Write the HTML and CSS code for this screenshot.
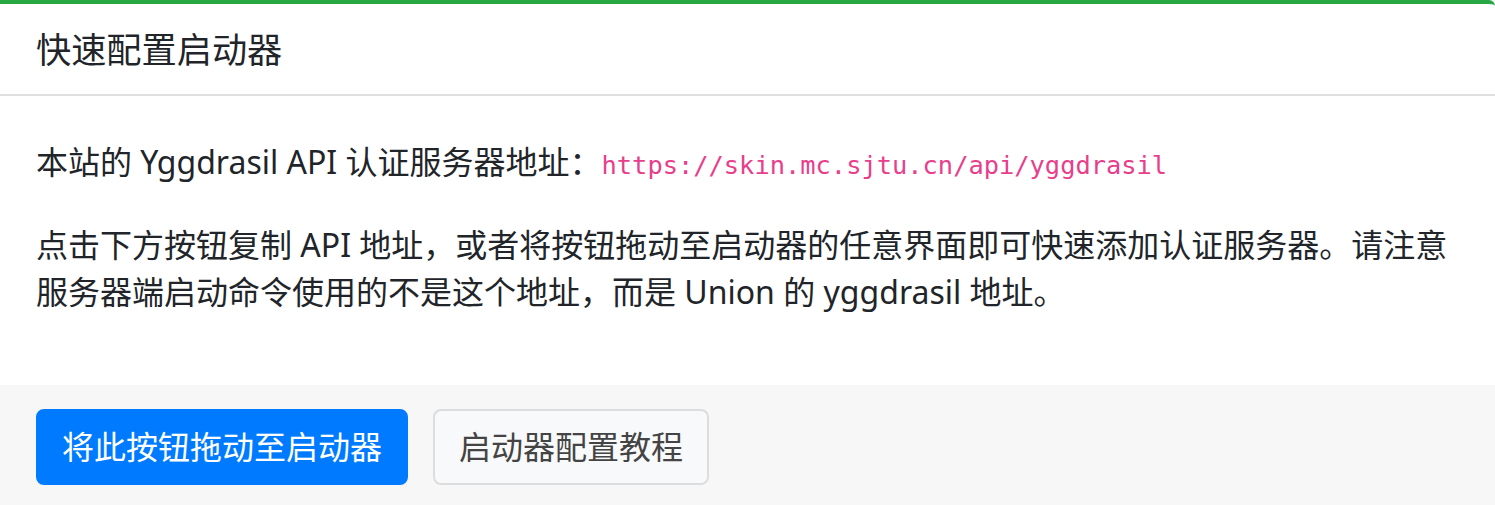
FILE: index.html
```html
<!DOCTYPE html>
<html lang="zh-CN">
<head>
<meta charset="utf-8">
<title>快速配置启动器</title>
<link rel="stylesheet" href="styles.css">
</head>
<body>
<div class="card">
  <div class="card-header">
    <h3 class="card-title">快速配置启动器</h3>
  </div>
  <div class="card-body">
    <p>本站的 Yggdrasil API 认证服务器地址：<code>https://skin.mc.sjtu.cn/api/yggdrasil</code></p>
    <p>点击下方按钮复制 API 地址，或者将按钮拖动至启动器的任意界面即可快速添加认证服务器。请注意服务器端启动命令使用的不是这个地址，而是 Union 的 yggdrasil 地址。</p>
  </div>
  <div class="card-footer">
    <button class="btn btn-primary">将此按钮拖动至启动器</button>
    <button class="btn btn-default">启动器配置教程</button>
  </div>
</div>
</body>
</html>
```
FILE: styles.css
```css
html, body {
  margin: 0;
  padding: 0;
  background: #ffffff;
}
body {
  font-family: "Noto Sans", "Noto Sans CJK SC", sans-serif;
  font-size: 32px;
  line-height: 48px;
  color: #212529;
}
.card {
  background: #ffffff;
  border-top: 4px solid #28a745;
  border-radius: 0 6px 0 0;
}
.card-header {
  padding: 19px 36px;
  border-bottom: 2px solid #dfdfdf;
}
.card-title {
  margin: 0;
  font-size: 35.2px;
  font-weight: 400;
  line-height: 52px;
  color: #212529;
}
.card-body {
  padding: 42px 36px 38px;
}
.card-body p {
  margin: 0 0 36px;
  line-height: 47px;
}
.card-body p:last-child {
  margin-bottom: 32px;
}
code {
  font-family: "DejaVu Sans Mono", monospace;
  font-size: 25.4px;
  line-height: 1;
  color: #e83e8c;
}
.card-footer {
  background: #f7f7f7;
  padding: 24px 36px;
  display: flex;
  gap: 25px;
}
.btn {
  font-family: "Noto Sans", "Noto Sans CJK SC", sans-serif;
  font-size: 32px;
  line-height: 48px;
  padding: 12px 24px;
  border-radius: 8px;
  border: 2px solid transparent;
  cursor: pointer;
}
.btn-primary {
  background: #007bff;
  border-color: #007bff;
  color: #ffffff;
}
.btn-default {
  background: #f8f9fa;
  border-color: #dddddd;
  color: #444444;
}
```
